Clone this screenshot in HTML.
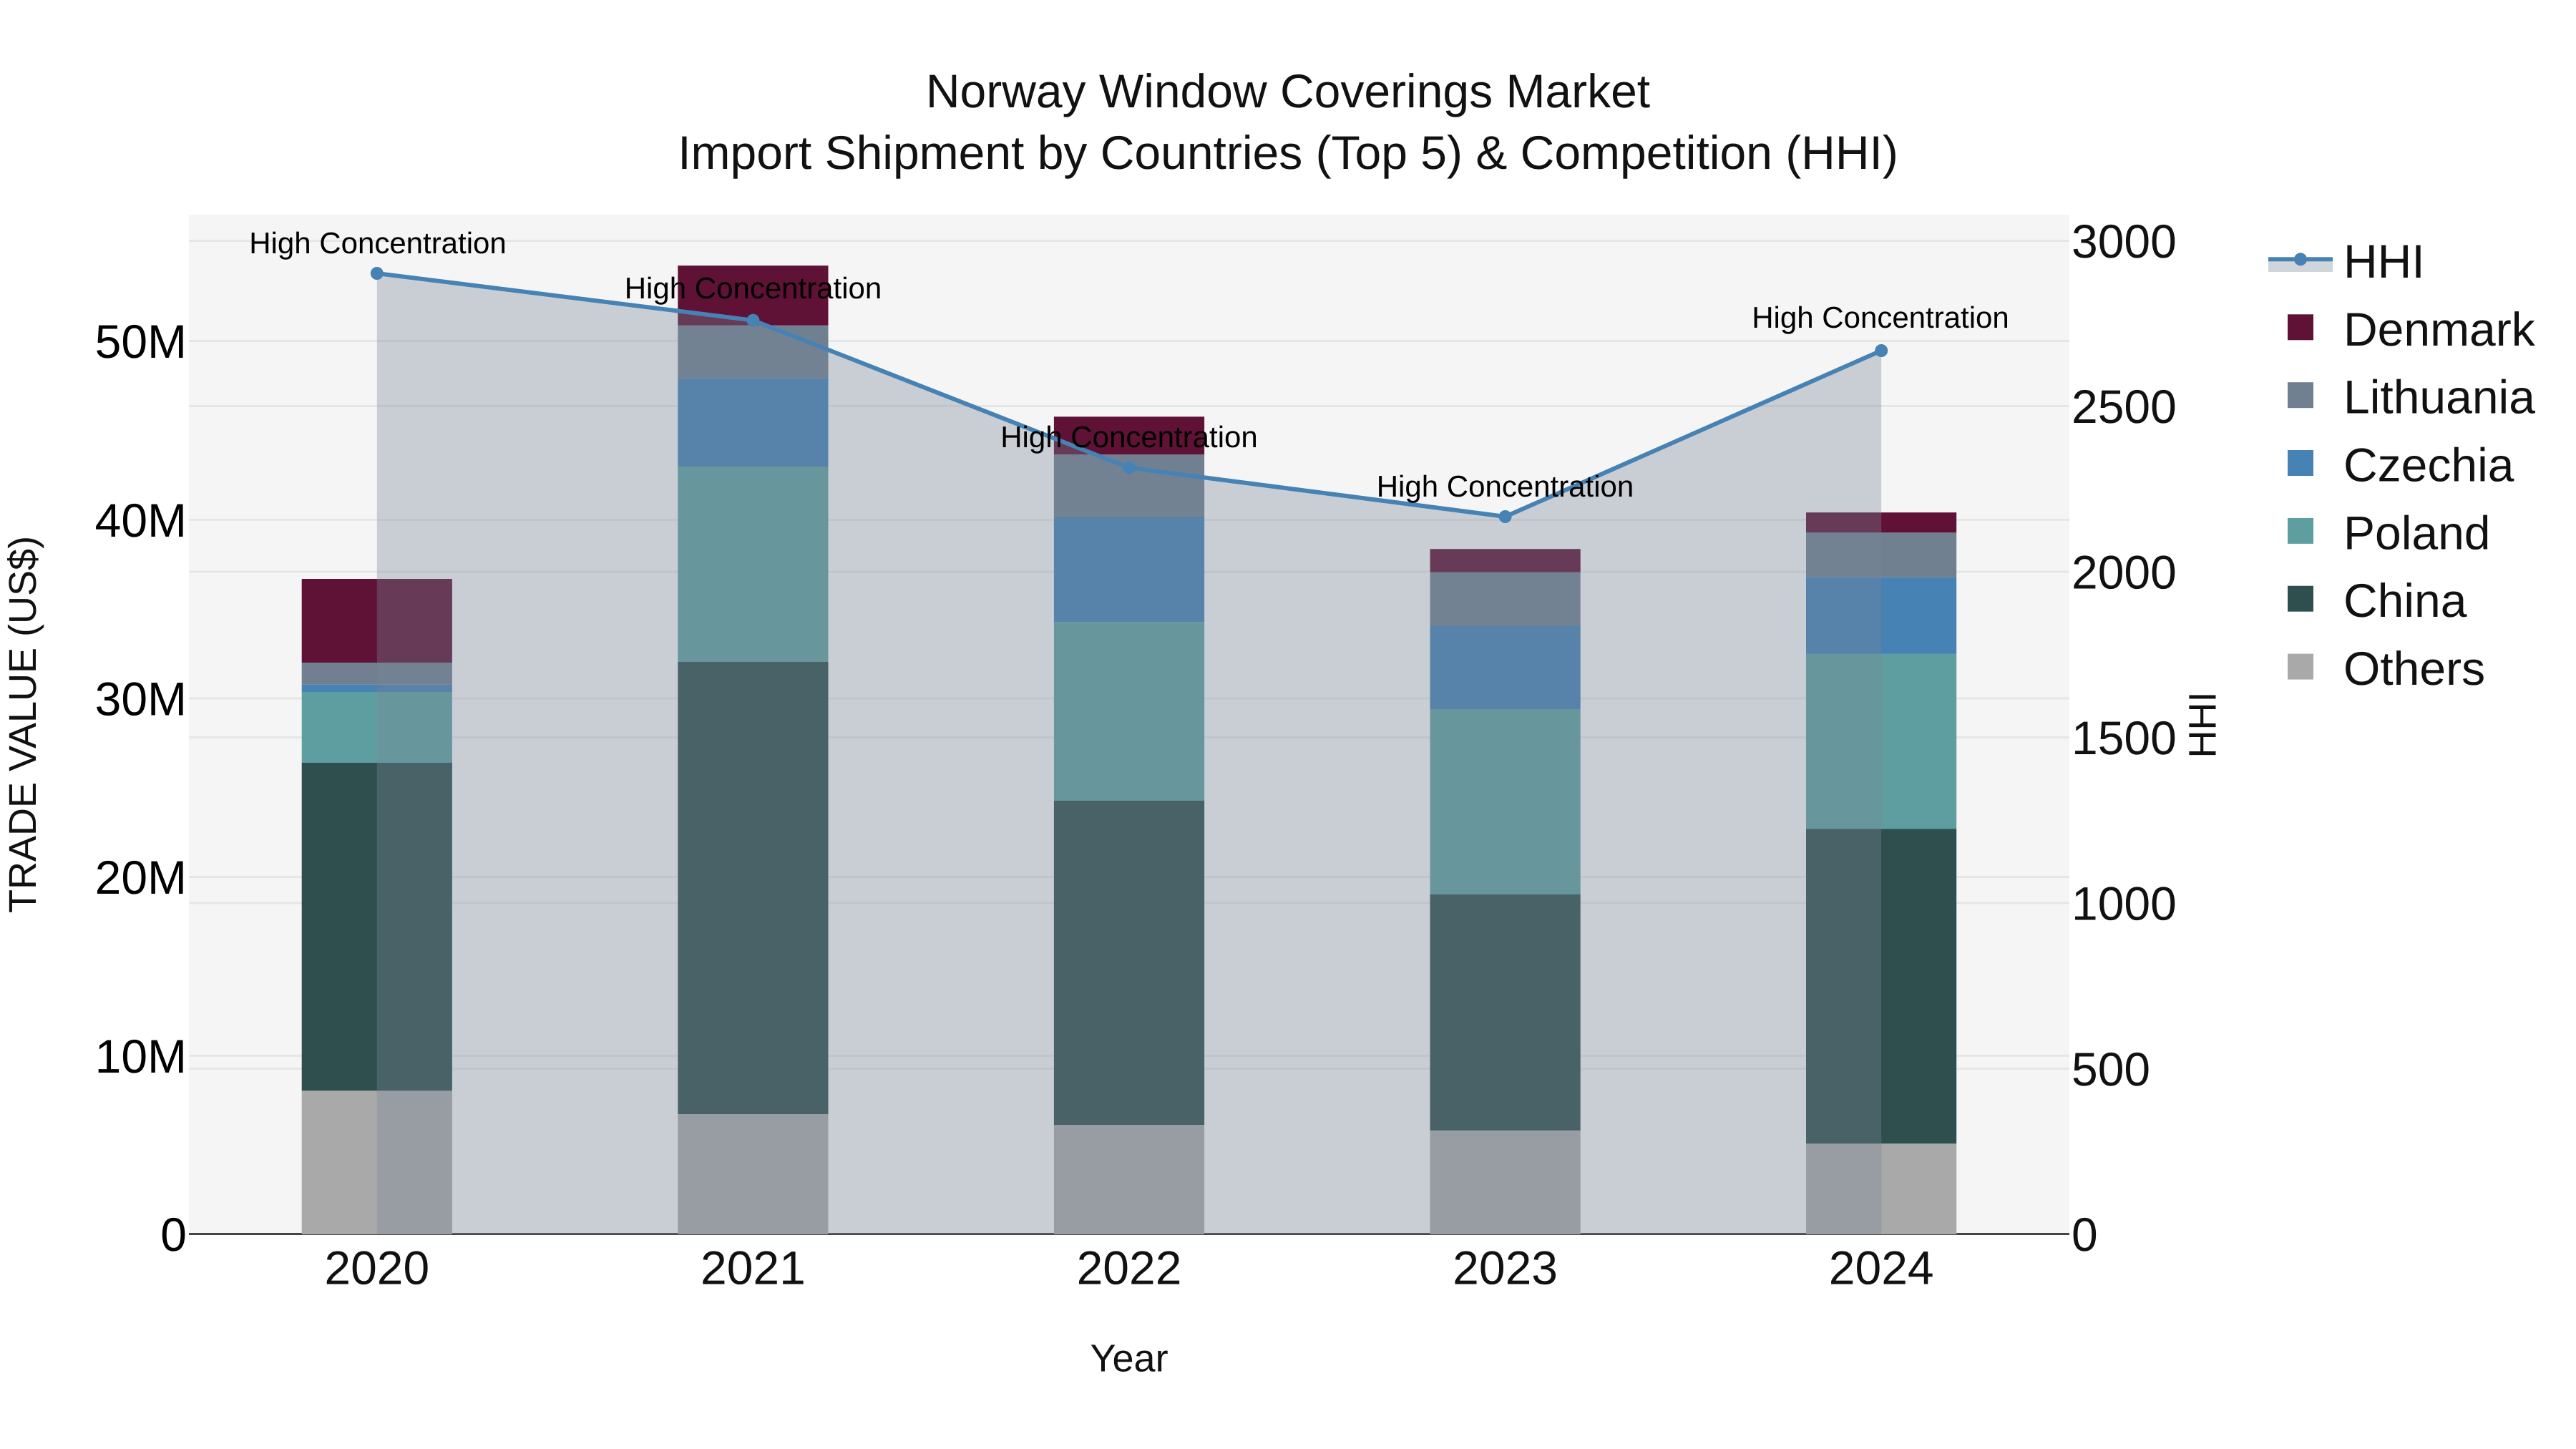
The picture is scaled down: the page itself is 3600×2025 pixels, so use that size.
<!DOCTYPE html>
<html lang="en">
<head>
<meta charset="utf-8">
<title>Norway Window Coverings Market</title>
<style>
html,body{margin:0;padding:0;background:#fff;width:3600px;height:2025px;overflow:hidden}
svg{display:block}
text{font-family:"Liberation Sans",Arial,sans-serif;text-rendering:geometricPrecision}
</style>
</head>
<body>
<svg xmlns="http://www.w3.org/2000/svg" width="3600" height="2025" viewBox="0 0 3600 2025">
<rect width="3600" height="2025" fill="#ffffff"/>
<rect x="264" y="300" width="2628" height="1425" fill="#f5f5f5"/>
<!-- grid -->
<g fill="#e6e6e6">
<rect x="264" y="475" width="2628" height="3"/>
<rect x="264" y="725" width="2628" height="3"/>
<rect x="264" y="974.5" width="2628" height="3"/>
<rect x="264" y="1224" width="2628" height="3"/>
<rect x="264" y="1474" width="2628" height="3"/>
<rect x="264" y="335" width="2628" height="3"/>
<rect x="264" y="566" width="2628" height="3"/>
<rect x="264" y="797.5" width="2628" height="3"/>
<rect x="264" y="1029" width="2628" height="3"/>
<rect x="264" y="1260.5" width="2628" height="3"/>
<rect x="264" y="1492" width="2628" height="3"/>
</g>
<rect x="264" y="1723" width="2628" height="3" fill="#444444"/>
<!-- bars 2020 -->
<g>
<rect x="421.7" y="1524.3" width="210.2" height="200.7" fill="#a9a9a9"/>
<rect x="421.7" y="1066" width="210.2" height="458.3" fill="#2f4f4f"/>
<rect x="421.7" y="967" width="210.2" height="99" fill="#5f9ea0"/>
<rect x="421.7" y="956.7" width="210.2" height="10.3" fill="#4682b4"/>
<rect x="421.7" y="926" width="210.2" height="30.7" fill="#708090"/>
<rect x="421.7" y="809" width="210.2" height="117" fill="#5f1235"/>
</g>
<!-- bars 2021 -->
<g>
<rect x="947.3" y="1557" width="210.2" height="168" fill="#a9a9a9"/>
<rect x="947.3" y="924.7" width="210.2" height="632.3" fill="#2f4f4f"/>
<rect x="947.3" y="652" width="210.2" height="272.7" fill="#5f9ea0"/>
<rect x="947.3" y="528.7" width="210.2" height="123.3" fill="#4682b4"/>
<rect x="947.3" y="454.7" width="210.2" height="74" fill="#708090"/>
<rect x="947.3" y="371.2" width="210.2" height="83.5" fill="#5f1235"/>
</g>
<!-- bars 2022 -->
<g>
<rect x="1472.9" y="1572" width="210.2" height="153" fill="#a9a9a9"/>
<rect x="1472.9" y="1119" width="210.2" height="453" fill="#2f4f4f"/>
<rect x="1472.9" y="869.3" width="210.2" height="249.7" fill="#5f9ea0"/>
<rect x="1472.9" y="722" width="210.2" height="147.3" fill="#4682b4"/>
<rect x="1472.9" y="635.2" width="210.2" height="86.8" fill="#708090"/>
<rect x="1472.9" y="582.3" width="210.2" height="52.9" fill="#5f1235"/>
</g>
<!-- bars 2023 -->
<g>
<rect x="1998.5" y="1579.8" width="210.2" height="145.2" fill="#a9a9a9"/>
<rect x="1998.5" y="1249.7" width="210.2" height="330.1" fill="#2f4f4f"/>
<rect x="1998.5" y="991" width="210.2" height="258.7" fill="#5f9ea0"/>
<rect x="1998.5" y="875" width="210.2" height="116" fill="#4682b4"/>
<rect x="1998.5" y="799.7" width="210.2" height="75.3" fill="#708090"/>
<rect x="1998.5" y="767.2" width="210.2" height="32.5" fill="#5f1235"/>
</g>
<!-- bars 2024 -->
<g>
<rect x="2524" y="1598.2" width="210.2" height="126.8" fill="#a9a9a9"/>
<rect x="2524" y="1158.2" width="210.2" height="440" fill="#2f4f4f"/>
<rect x="2524" y="913.9" width="210.2" height="244.3" fill="#5f9ea0"/>
<rect x="2524" y="806.8" width="210.2" height="107.1" fill="#4682b4"/>
<rect x="2524" y="744.3" width="210.2" height="62.5" fill="#708090"/>
<rect x="2524" y="716.2" width="210.2" height="28.1" fill="#5f1235"/>
</g>
<!-- HHI area -->
<path d="M526.8 382L1052.4 447.7L1578 653.7L2103.6 722L2629.2 490L2629.2 1725L526.8 1725Z" fill="#778899" fill-opacity="0.35"/>
<path d="M526.8 382L1052.4 447.7L1578 653.7L2103.6 722L2629.2 490" fill="none" stroke="#4682b4" stroke-width="6" stroke-linejoin="round"/>
<g fill="#4682b4">
<circle cx="526.8" cy="382" r="9"/>
<circle cx="1052.4" cy="447.7" r="9"/>
<circle cx="1578" cy="653.7" r="9"/>
<circle cx="2103.6" cy="722" r="9"/>
<circle cx="2629.2" cy="490" r="9"/>
</g>
<!-- annotations -->
<g font-size="42" fill="#000000" text-anchor="middle">
<text x="528" y="354">High Concentration</text>
<text x="1052.5" y="417">High Concentration</text>
<text x="1578" y="625">High Concentration</text>
<text x="2103.5" y="694">High Concentration</text>
<text x="2628" y="458">High Concentration</text>
</g>
<!-- title -->
<g font-size="66" fill="#111111" text-anchor="middle">
<text x="1800" y="150">Norway Window Coverings Market</text>
<text x="1800" y="236">Import Shipment by Countries (Top 5) &amp; Competition (HHI)</text>
</g>
<!-- left ticks -->
<g font-size="66" fill="#000000" text-anchor="end">
<text x="261" y="500">50M</text>
<text x="261" y="750">40M</text>
<text x="261" y="999.5">30M</text>
<text x="261" y="1249">20M</text>
<text x="261" y="1499">10M</text>
<text x="261" y="1748">0</text>
</g>
<!-- right ticks -->
<g font-size="66" fill="#111111">
<text x="2895" y="360">3000</text>
<text x="2895" y="591">2500</text>
<text x="2895" y="822.5">2000</text>
<text x="2895" y="1054">1500</text>
<text x="2895" y="1285.5">1000</text>
<text x="2895" y="1517">500</text>
<text x="2895" y="1748">0</text>
</g>
<!-- x ticks -->
<g font-size="66" fill="#111111" text-anchor="middle">
<text x="526.8" y="1794.5">2020</text>
<text x="1052.4" y="1794.5">2021</text>
<text x="1578" y="1794.5">2022</text>
<text x="2103.6" y="1794.5">2023</text>
<text x="2629.2" y="1794.5">2024</text>
</g>
<!-- axis titles -->
<g font-size="54" fill="#111111" text-anchor="middle">
<text x="1578" y="1916.5">Year</text>
<text transform="translate(50 1012.5) rotate(-90)">TRADE VALUE (US$)</text>
<text transform="translate(3096.5 1013) rotate(-90)">HHI</text>
</g>
<!-- legend -->
<rect x="3170" y="362" width="90" height="18" fill="#778899" fill-opacity="0.35"/>
<rect x="3170" y="359.3" width="90" height="6" fill="#4682b4"/>
<circle cx="3215" cy="362.3" r="9" fill="#4682b4"/>
<rect x="3197" y="439.3" width="36" height="36" fill="#5f1235"/>
<rect x="3197" y="534.2" width="36" height="36" fill="#708090"/>
<rect x="3197" y="629" width="36" height="36" fill="#4682b4"/>
<rect x="3197" y="723.9" width="36" height="36" fill="#5f9ea0"/>
<rect x="3197" y="818.7" width="36" height="36" fill="#2f4f4f"/>
<rect x="3197" y="913.6" width="36" height="36" fill="#a9a9a9"/>
<g font-size="66" fill="#111111">
<text x="3275" y="388">HHI</text>
<text x="3275" y="482.8">Denmark</text>
<text x="3275" y="577.7">Lithuania</text>
<text x="3275" y="672.5">Czechia</text>
<text x="3275" y="767.4">Poland</text>
<text x="3275" y="862.2">China</text>
<text x="3275" y="957.1">Others</text>
</g>
</svg>
</body>
</html>
